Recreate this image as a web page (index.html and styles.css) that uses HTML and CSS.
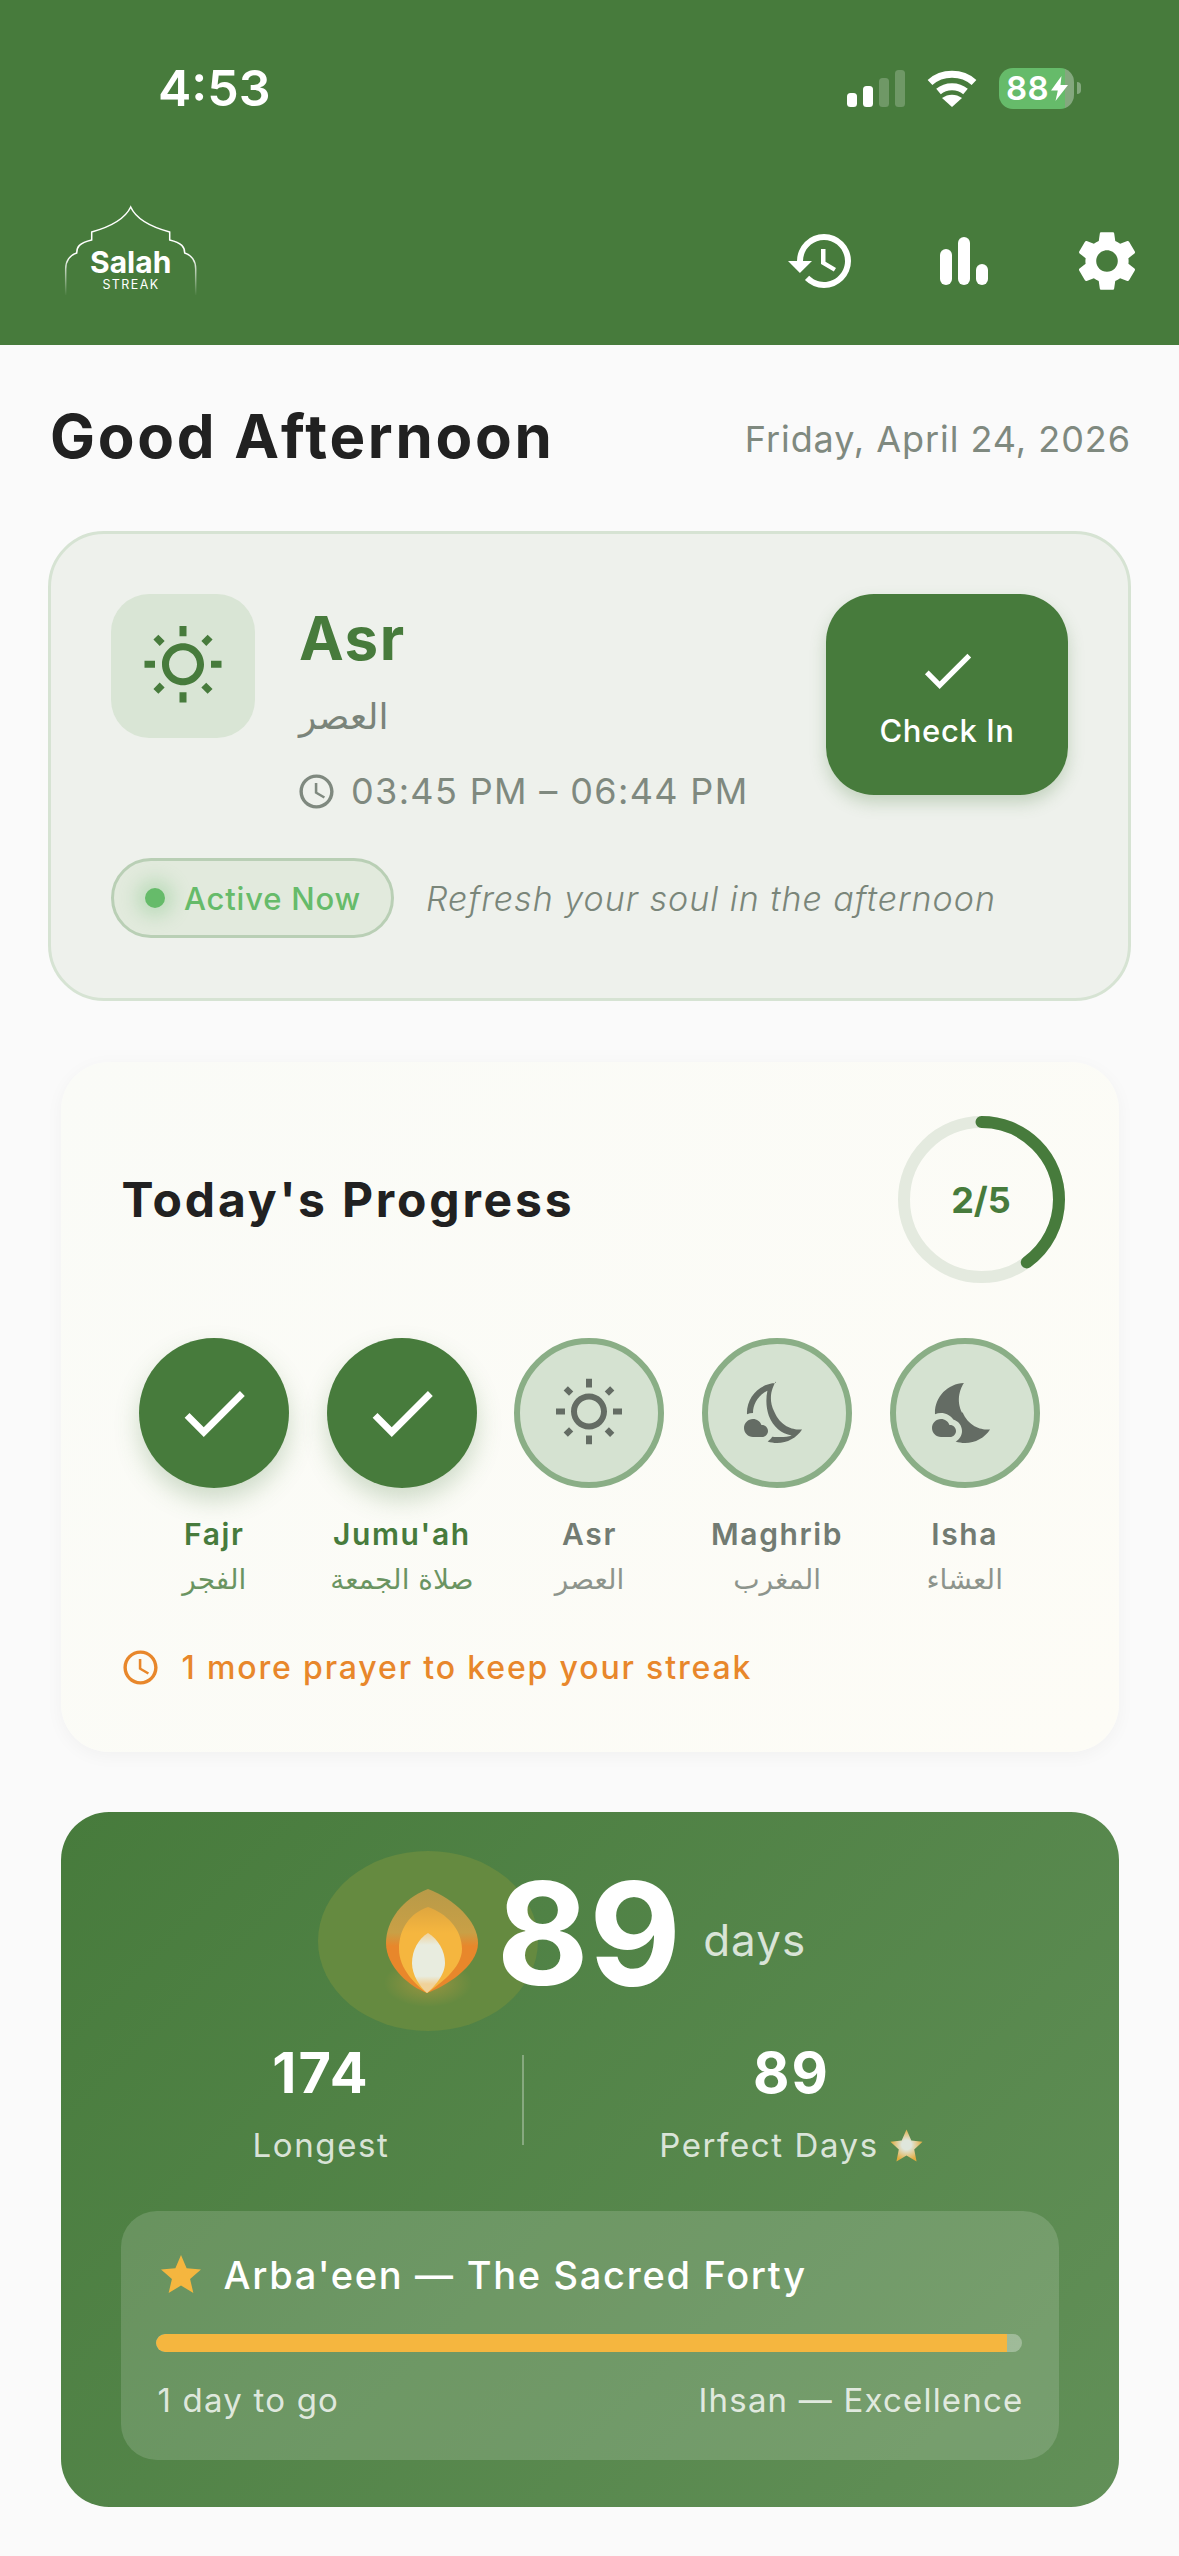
FILE: index.html
```html
<!DOCTYPE html>
<html lang="en">
<head>
<meta charset="UTF-8" />
<meta name="viewport" content="width=device-width, initial-scale=1" />
<title>Salah Streak</title>
<link rel="stylesheet" href="styles.css">
</head>
<body>

<svg class="icon-defs" width="0" height="0" aria-hidden="true">
  <defs>
    <symbol id="i-sun" viewBox="0 0 24 24">
      <path d="M6.76 4.84l-1.8-1.79-1.41 1.41 1.79 1.79zM4 10.5H1v2h3zm9-9.95h-2V3.5h2zm7.45 3.91l-1.41-1.41-1.79 1.79 1.41 1.41zm-3.21 13.7l1.79 1.8 1.41-1.41-1.8-1.79zM20 10.5v2h3v-2zm-8-5c-3.31 0-6 2.69-6 6s2.69 6 6 6 6-2.69 6-6-2.69-6-6-6zm0 10c-2.21 0-4-1.79-4-4s1.79-4 4-4 4 1.79 4 4-1.79 4-4 4zm-1 4h2v2.95h-2zm-7.45-.96l1.41 1.41 1.79-1.8-1.41-1.41z"/>
    </symbol>
    <symbol id="i-check" viewBox="0 0 24 24">
      <path d="M9 16.17L4.83 12l-1.42 1.41L9 19 21 7l-1.41-1.41z"/>
    </symbol>
    <symbol id="i-clock" viewBox="0 0 24 24">
      <path d="M11.99 2C6.47 2 2 6.48 2 12s4.47 10 9.99 10C17.52 22 22 17.52 22 12S17.52 2 11.99 2zM12 20c-4.42 0-8-3.58-8-8s3.58-8 8-8 8 3.58 8 8-3.58 8-8 8zm.5-13H11v6l5.25 3.15.75-1.23-4.5-2.67z"/>
    </symbol>
    <symbol id="i-moon-line" viewBox="0 0 24 24">
      <path d="M11.63 2.01C6.27 2.2 1.98 6.59 1.98 12c0 .14.02.28.02.42.62-.27 1.29-.42 2-.42C4 8.8 5.9 6 8.8 4.6 8.2 7.5 8.4 10.4 9.3 13c1.5 3.7 4.1 5.9 7.6 6.5-1.4.5-3 .6-4.9.5-.5 0-1-.05-1.6-.1-.4.7-1 1.2-1.52 1.61.98.32 2.03.5 3.11.5 3.5 0 6.58-1.8 8.37-4.52-2.36.23-6.98-.49-9.26-5.91-2.33-4.51-.5-8.48.53-10.07z"/>
      <path d="M7 16h-.18C6.4 14.84 5.3 14 4 14c-1.66 0-3 1.34-3 3s1.34 3 3 3h3c1.1 0 2-.9 2-2s-.9-2-2-2z"/>
    </symbol>
    <symbol id="i-moon-fill" viewBox="0 0 24 24">
      <path d="M11.1 12.08c-2.33-4.51-.5-8.48.53-10.07C6.27 2.2 1.98 6.59 1.98 12c0 .14.02.28.02.42.62-.27 1.29-.42 2-.42 1.66 0 3.18.83 4.1 2.15C9.77 14.63 11 16.17 11 18c0 1.52-.87 2.83-2.12 3.51.98.32 2.03.5 3.11.5 3.5 0 6.58-1.8 8.37-4.52-2.36.23-6.98-.49-9.26-5.91z"/>
      <path d="M7 16h-.18C6.4 14.84 5.3 14 4 14c-1.66 0-3 1.34-3 3s1.34 3 3 3h3c1.1 0 2-.9 2-2s-.9-2-2-2z"/>
    </symbol>
    <symbol id="i-star" viewBox="0 0 24 24">
      <path d="M12 17.27L18.18 21l-1.64-7.03L22 9.24l-7.19-.61L12 2 9.19 8.63 2 9.24l5.46 4.73L5.82 21z"/>
    </symbol>
  </defs>
</svg>

<header class="header">
  <div class="status">
    <span class="time">4:53</span>
    <div class="status-icons">
      <svg class="signal" width="58" height="37" viewBox="0 0 58 37">
        <rect x="0" y="23" width="10" height="14" rx="3.5" fill="#fff"/>
        <rect x="16" y="16" width="10" height="21" rx="3.5" fill="#fff"/>
        <rect x="32" y="8" width="10" height="29" rx="3.5" fill="#fff" fill-opacity=".22"/>
        <rect x="48" y="0" width="10" height="37" rx="3.5" fill="#fff" fill-opacity=".22"/>
      </svg>
      <svg class="wifi" width="50" height="37" viewBox="0 0 50 37">
        <path d="M3 12.5C15 1.5 35 1.5 47 12.5" fill="none" stroke="#fff" stroke-width="7"/>
        <path d="M11.5 21.5C19 15 31 15 38.5 21.5" fill="none" stroke="#fff" stroke-width="7"/>
        <path d="M25 37L15 28C21 23.500 29 23.500 35 28Z" fill="#fff"/>
      </svg>
      <div class="battery-wrap">
        <div class="battery">
          <span>88</span>
          <svg width="17" height="25" viewBox="0 0 17 25"><path d="M10.500 0L0 14.500H6.800L4.500 25 17 9H9.500Z" fill="#fff"/></svg>
        </div>
        <div class="battery-nub"></div>
      </div>
    </div>
  </div>
  <nav class="nav">
    <svg class="logo" width="142" height="120" viewBox="0 0 142 120">
      <defs>
        <linearGradient id="logo-fade" gradientUnits="userSpaceOnUse" x1="0" y1="55" x2="0" y2="95">
          <stop offset="0" stop-color="#fff"/>
          <stop offset="1" stop-color="#fff" stop-opacity="0"/>
        </linearGradient>
      </defs>
      <path d="M5.700 94V68C5.700 60 10 54 16.700 52C16.700 46 19 42 31.700 39V31C46 27 64 20 70.700 6C77 20 95 27 109.700 31V39C122 42 124.700 46 124.700 52C131.400 54 135.700 60 135.700 68V94" fill="none" stroke="url(#logo-fade)" stroke-width="1.500"/>
      <text class="logo-name" x="70.700" y="72" text-anchor="middle">Salah</text>
      <text class="logo-sub" x="71" y="88" text-anchor="middle">STREAK</text>
    </svg>
    <div class="nav-icons">
      <svg class="nav-icon" viewBox="0 0 24 24"><path d="M13 3a9 9 0 0 0-9 9H1l3.890 3.890.07.14L9 12H6c0-3.870 3.130-7 7-7s7 3.130 7 7-3.130 7-7 7c-1.930 0-3.680-.79-4.940-2.060l-1.420 1.420A8.954 8.954 0 0 0 13 21a9 9 0 0 0 0-18zm-1 5v5l4.280 2.540.72-1.210-3.500-2.080V8z"/></svg>
      <svg class="nav-icon" viewBox="0 0 72 72">
        <rect x="12" y="24" width="12" height="36" rx="6"/>
        <rect x="30" y="12" width="12" height="48" rx="6"/>
        <rect x="48" y="39" width="12" height="21" rx="6"/>
      </svg>
      <svg class="nav-icon" viewBox="0 0 24 24"><path d="M19.140 12.940c.04-.3.06-.61.06-.94 0-.32-.02-.64-.07-.94l2.030-1.580c.18-.14.23-.41.12-.61l-1.920-3.320c-.12-.22-.37-.29-.59-.22l-2.390.96c-.5-.38-1.030-.7-1.620-.94l-.36-2.540c-.04-.24-.24-.41-.48-.41h-3.840c-.24 0-.43.17-.47.41l-.36 2.540c-.59.24-1.130.57-1.620.94l-2.390-.96c-.22-.08-.47 0-.59.22L2.740 8.870c-.12.21-.08.47.12.61l2.030 1.580c-.05.3-.09.63-.09.94s.02.64.07.94l-2.030 1.580c-.18.14-.23.41-.12.61l1.920 3.320c.12.22.37.29.59.22l2.390-.96c.5.38 1.030.7 1.620.94l.36 2.540c.05.24.24.41.48.41h3.840c.24 0 .44-.17.47-.41l.36-2.540c.59-.24 1.130-.56 1.620-.94l2.390.96c.22.08.47 0 .59-.22l1.920-3.320c.12-.22.07-.47-.12-.61l-2.010-1.580zM12 15.600c-1.980 0-3.600-1.620-3.600-3.600s1.620-3.600 3.600-3.600 3.600 1.620 3.600 3.600-1.620 3.600-3.600 3.600z"/></svg>
    </div>
  </nav>
</header>

<main class="main">
  <div class="greeting">
    <h1>Good Afternoon</h1>
    <span class="date">Friday, April 24, 2026</span>
  </div>

  <section class="current">
    <div class="current-top">
      <div class="sun-tile"><svg class="sun-big"><use href="#i-sun"/></svg></div>
      <div class="current-info">
        <div class="current-name">Asr</div>
        <div class="current-arabic" dir="rtl">العصر</div>
        <div class="current-time">
          <svg class="clock"><use href="#i-clock"/></svg>
          <span>03:45 PM – 06:44 PM</span>
        </div>
      </div>
      <button class="checkin">
        <svg class="checkin-icon"><use href="#i-check"/></svg>
        <span>Check In</span>
      </button>
    </div>
    <div class="current-bottom">
      <div class="pill"><i class="pill-dot"></i><span>Active Now</span></div>
      <span class="tagline">Refresh your soul in the afternoon</span>
    </div>
  </section>

  <section class="progress">
    <div class="progress-head">
      <h2>Today's Progress</h2>
      <div class="ring">
        <svg width="167" height="167" viewBox="0 0 167 167">
          <circle cx="83.500" cy="83.500" r="77.500" fill="none" stroke="#e4eadf" stroke-width="12"/>
          <circle cx="83.500" cy="83.500" r="77.500" fill="none" stroke="#477b3c" stroke-width="12" stroke-linecap="round" stroke-dasharray="194.800 487" transform="rotate(-90 83.500 83.500)"/>
        </svg>
        <span>2/5</span>
      </div>
    </div>
    <div class="prayers">
      <div class="prayer done">
        <div class="prayer-circle"><svg class="prayer-check"><use href="#i-check"/></svg></div>
        <div class="prayer-name">Fajr</div>
        <div class="prayer-arabic" dir="rtl">الفجر</div>
      </div>
      <div class="prayer done">
        <div class="prayer-circle"><svg class="prayer-check"><use href="#i-check"/></svg></div>
        <div class="prayer-name">Jumu'ah</div>
        <div class="prayer-arabic" dir="rtl">صلاة الجمعة</div>
      </div>
      <div class="prayer">
        <div class="prayer-circle"><svg class="prayer-icon"><use href="#i-sun"/></svg></div>
        <div class="prayer-name">Asr</div>
        <div class="prayer-arabic" dir="rtl">العصر</div>
      </div>
      <div class="prayer">
        <div class="prayer-circle"><svg class="prayer-icon"><use href="#i-moon-line"/></svg></div>
        <div class="prayer-name">Maghrib</div>
        <div class="prayer-arabic" dir="rtl">المغرب</div>
      </div>
      <div class="prayer">
        <div class="prayer-circle"><svg class="prayer-icon"><use href="#i-moon-fill"/></svg></div>
        <div class="prayer-name">Isha</div>
        <div class="prayer-arabic" dir="rtl">العشاء</div>
      </div>
    </div>
    <div class="reminder">
      <svg class="clock"><use href="#i-clock"/></svg>
      <span>1 more prayer to keep your streak</span>
    </div>
  </section>

  <section class="streak">
    <div class="streak-top">
      <svg class="flame" width="220" height="180" viewBox="0 0 220 180">
        <defs>
          <linearGradient id="flame-outer" x1="0" y1="0" x2="0" y2="1">
            <stop offset="0" stop-color="#b89a48"/>
            <stop offset=".42" stop-color="#c9a046"/>
            <stop offset=".55" stop-color="#e8872b"/>
            <stop offset="1" stop-color="#e8872b"/>
          </linearGradient>
          <linearGradient id="flame-mid" x1="0" y1="0" x2="0" y2="1">
            <stop offset="0" stop-color="#dfa63f"/>
            <stop offset=".3" stop-color="#f5b63f"/>
            <stop offset="1" stop-color="#f5b63f"/>
          </linearGradient>
          <linearGradient id="flame-core" x1="0" y1="0" x2="0" y2="1">
            <stop offset="0" stop-color="#f0d29a"/>
            <stop offset=".2" stop-color="#e8ecdf"/>
            <stop offset=".72" stop-color="#e8ecdf"/>
            <stop offset=".85" stop-color="#f0d29a"/>
          </linearGradient>
          <radialGradient id="flame-drip" cx=".5" cy=".5" r=".5">
            <stop offset="0" stop-color="#e8a63f" stop-opacity=".4"/>
            <stop offset="1" stop-color="#e8a63f" stop-opacity="0"/>
          </radialGradient>
        </defs>
        <ellipse cx="110" cy="90" rx="110" ry="90" fill="#658a40"/>
        <ellipse cx="110" cy="132" rx="44" ry="24" fill="url(#flame-drip)"/>
        <path d="M110 38C84 48 68 70 68 92C68 116 92 136 109 142C126 136 160 116 160 92C160 70 136 48 110 38Z" fill="url(#flame-outer)"/>
        <path d="M110 56C92 62 81 78 81 98C81 118 98 134 109 142C120 134 144 118 144 98C144 78 128 62 110 56Z" fill="url(#flame-mid)"/>
        <path d="M110 82C100 88 94 100 94 112C94 124 102 136 109 142C116 136 127 124 127 112C127 100 120 88 110 82Z" fill="url(#flame-core)"/>
      </svg>
      <span class="streak-num">89</span>
      <span class="streak-unit">days</span>
    </div>
    <div class="stats">
      <div class="stat">
        <div class="stat-num">174</div>
        <div class="stat-label">Longest</div>
      </div>
      <div class="stat-line"></div>
      <div class="stat">
        <div class="stat-num">89</div>
        <div class="stat-label">Perfect Days
          <svg class="stat-star" viewBox="0 0 24 24">
            <defs>
              <radialGradient id="star-fill" cx=".5" cy=".48" r=".5">
                <stop offset=".3" stop-color="#dfe6dc"/>
                <stop offset="1" stop-color="#e3ab3d"/>
              </radialGradient>
            </defs>
            <path d="M12 1L15.300 8.500 23 9.400 17.300 14.700 18.900 23 12 18.800 5.100 23 6.700 14.700 1 9.400 8.700 8.500Z" fill="url(#star-fill)"/>
          </svg>
        </div>
      </div>
    </div>
    <div class="arbaeen">
      <div class="arbaeen-title">
        <svg class="arbaeen-star"><use href="#i-star"/></svg>
        <span>Arba'een — The Sacred Forty</span>
      </div>
      <div class="bar"><div class="bar-fill" style="width:98.3%"></div></div>
      <div class="arbaeen-foot">
        <span>1 day to go</span>
        <span>Ihsan — Excellence</span>
      </div>
    </div>
  </section>
</main>

</body>
</html>
```

FILE: styles.css
```css
html, body {
  margin: 0; padding: 0;
  width: 1179px; height: 2556px; overflow: hidden;
  font-family: Inter, "Noto Sans", sans-serif;
  background: #fafafa; color: #212121;
}
h1, h2 { margin: 0; }
svg { display: block; }
.icon-defs { position: absolute; }

/* header */
.header {
  height: 345px; box-sizing: border-box;
  background: #477b3c; color: #fff;
  padding-top: 58px;
}
.status {
  display: flex; justify-content: space-between; align-items: center;
  height: 60px; padding: 0 98px 0 158px;
}
.time { font-size: 50px; font-weight: 600; line-height: 60px; }
.status-icons { display: flex; align-items: center; gap: 22px; }
.battery-wrap { display: flex; align-items: center; gap: 3px; }
.battery {
  width: 75px; height: 41px; border-radius: 14px;
  background: linear-gradient(90deg, #66bb6a 88%, #84a87e 88%);
  display: flex; align-items: center; padding-left: 7px; box-sizing: border-box;
  font-size: 33px; font-weight: 600; letter-spacing: 0.5px;
}
.battery svg { margin-left: 2px; }
.battery-nub { width: 4px; height: 12px; background: #84a87e; border-radius: 0 6px 6px 0; }
.nav {
  display: flex; justify-content: space-between; align-items: center;
  margin-top: 83px; padding: 0 36px 0 60px;
}
.logo-name { font-family: Inter, sans-serif; font-size: 30px; font-weight: 700; fill: #fff; }
.logo-sub { font-family: Inter, sans-serif; font-size: 12.5px; letter-spacing: 1.4px; fill: #fff; }
.nav-icons { display: flex; align-items: center; gap: 71px; }
.nav-icon { width: 72px; height: 72px; fill: #fff; }

/* main column */
.main { display: flex; flex-direction: column; align-items: center; }
.greeting {
  width: 1079px; height: 72px; margin-top: 55px;
  display: flex; justify-content: space-between; align-items: center;
}
.greeting h1 { font-size: 60px; font-weight: 700; line-height: 72px; letter-spacing: 2.7px; }
.date { font-size: 36px; color: #7f897f; letter-spacing: 0.95px; margin: 6px -2px 0 0; }

/* current prayer */
.current {
  width: 1083px; box-sizing: border-box; margin-top: 59px;
  padding: 60px; background: #eef1ec;
  border: 3px solid #d6e3d3; border-radius: 56px;
}
.current-top { display: flex; align-items: flex-start; height: 201px; }
.sun-tile {
  width: 144px; height: 144px; border-radius: 38px;
  background: #d9e5d5; display: flex; align-items: center; justify-content: center;
}
.sun-big { width: 84px; height: 84px; fill: #477b3c; }
.current-info { flex: 1; margin-left: 44px; padding-top: 8px; }
.current-name { font-size: 60px; font-weight: 700; line-height: 72px; color: #477b3c; letter-spacing: 1.5px; }
.current-arabic {
  font-family: "DejaVu Sans", sans-serif; font-size: 36px; line-height: 56px;
  color: #7a847a; margin-top: 15px; text-align: right; width: max-content;
}
.current-time {
  display: flex; align-items: center; gap: 14px; margin-top: 24px;
  font-size: 36px; line-height: 44px; color: #7f897f; letter-spacing: 1.35px;
}
.clock { width: 41px; height: 41px; fill: currentColor; margin-left: -3px; }
.checkin {
  width: 242px; height: 201px; border: none; border-radius: 48px;
  padding: 0 0 2px;
  background: #477b3c; color: #fff; font-family: inherit;
  font-size: 31px; font-weight: 500; letter-spacing: 0.6px;
  box-shadow: 0 8px 16px rgba(72,124,60,0.25);
  display: flex; flex-direction: column; align-items: center; justify-content: center; gap: 10px;
}
.checkin-icon { width: 63px; height: 63px; fill: #fff; }
.current-bottom { display: flex; align-items: center; margin-top: 63px; }
.pill {
  width: 283px; height: 80px; box-sizing: border-box;
  border: 3px solid #b9cfb5; border-radius: 40px; background: #e2eadd;
  display: flex; align-items: center; padding-left: 31px; gap: 19px;
  font-size: 31px; font-weight: 500; color: #66bb6a; letter-spacing: 0.8px;
}
.pill-dot {
  width: 20px; height: 20px; border-radius: 50%; background: #66bb6a;
  box-shadow: 0 0 18px 9px rgba(102,187,106,0.28);
}
.tagline { margin-left: 32px; font-size: 34px; font-style: italic; font-weight: 300; color: #7a867a; letter-spacing: 1px; }

/* today's progress */
.progress {
  width: 1058px; box-sizing: border-box; margin-top: 61px; height: 690px;
  padding: 54px 60px 0;
  border-radius: 48px;
  background: linear-gradient(135deg, #fafbf7, #fdfcf6);
  box-shadow: 0 4px 18px rgba(0,0,0,0.04);
}
.progress-head { display: flex; justify-content: space-between; align-items: center; padding-left: 1px; margin-right: -6px; }
.progress-head h2 { font-size: 48px; font-weight: 700; letter-spacing: 2.8px; }
.ring { display: grid; place-items: center; font-size: 36px; font-weight: 700; color: #477b3c; }
.ring > * { grid-area: 1 / 1; }
.prayers { display: grid; grid-template-columns: repeat(5, 1fr); margin-top: 55px; }
.prayer { display: flex; flex-direction: column; align-items: center; color: #727b72; }
.prayer-circle {
  width: 150px; height: 150px; box-sizing: border-box; border-radius: 50%;
  background: #d5e2d1; border: 6px solid #8aae86;
  display: flex; align-items: center; justify-content: center;
}
.prayer.done { color: #477b3c; }
.prayer.done .prayer-circle {
  background: #477b3c; border: none;
  box-shadow: 0 12px 24px rgba(72,124,60,0.25);
}
.prayer-check { width: 82px; height: 82px; fill: #fff; }
.prayer-icon { width: 72px; height: 72px; fill: #646c64; }
.prayer-name { margin-top: 27px; font-size: 30px; line-height: 38px; font-weight: 600; letter-spacing: 1.6px; }
.prayer-arabic { margin-top: 6px; font-family: "DejaVu Sans", sans-serif; font-size: 28px; line-height: 42px; opacity: 0.8; }
.reminder {
  display: flex; align-items: center; gap: 21px; margin: 46px 0 0 2px;
  font-size: 32px; font-weight: 500; color: #e8872b; letter-spacing: 1.85px;
}

/* streak */
.streak {
  width: 1058px; height: 695px; box-sizing: border-box; margin-top: 60px;
  padding-top: 39px; border-radius: 48px;
  background: linear-gradient(135deg, #477b3c, #629058);
  color: #fff;
}
.streak-top { display: flex; align-items: center; height: 180px; padding-left: 257px; }
.flame { margin-right: -41px; }
.streak-num { position: relative; font-size: 142px; font-weight: 700; line-height: 180px; margin-top: -16px; }
.streak-unit { margin-left: 22px; font-size: 44px; color: rgba(255,255,255,0.78); letter-spacing: 1px; margin-top: -3px; }
.stats {
  display: grid; grid-template-columns: 461px 2px 1fr; margin-top: 12px; height: 120px; padding-right: 59px;
}
.stat { display: flex; flex-direction: column; align-items: center; }
.stat:first-child { padding-left: 60px; }
.stat-num { font-size: 56px; font-weight: 700; line-height: 60px; letter-spacing: 2px; }
.stat-label {
  margin-top: 20px; font-size: 33px; line-height: 44px; letter-spacing: 1.6px;
  color: rgba(255,255,255,0.8); display: flex; align-items: center; gap: 10px;
}
.stat-star { width: 35px; height: 35px; }
.stat-line { width: 2px; height: 90px; margin-top: 12px; background: rgba(255,255,255,0.3); }
.arbaeen {
  width: 938px; height: 249px; box-sizing: border-box;
  margin: 48px auto 0; padding: 36px 37px 0 35px;
  border-radius: 36px; background: rgba(255,255,255,0.15);
}
.arbaeen-title { display: flex; align-items: center; gap: 19px; font-size: 38px; font-weight: 500; letter-spacing: 1.7px; line-height: 56px; }
.arbaeen-star { width: 48px; height: 48px; fill: #f5b63f; margin-left: 1px; }
.bar { height: 18px; margin-top: 31px; border-radius: 9px; background: rgba(255,255,255,0.3); overflow: hidden; }
.bar-fill { height: 100%; background: #f5b63f; border-radius: 9px 0 0 9px; }
.arbaeen-foot {
  display: flex; justify-content: space-between; margin: 26px -2px 0 0; padding-left: 2px;
  font-size: 33px; line-height: 44px; letter-spacing: 1.2px; color: rgba(255,255,255,0.8);
}
```
